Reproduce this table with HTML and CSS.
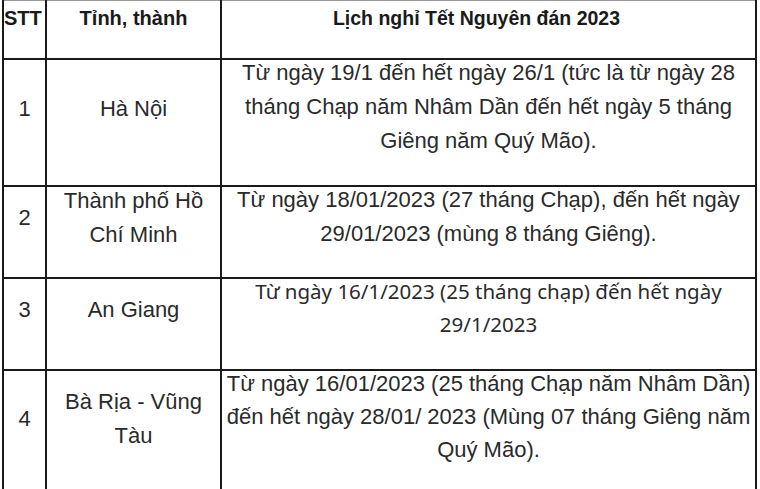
FILE: index.html
```html
<!DOCTYPE html>
<html lang="vi">
<head>
<meta charset="utf-8">
<link rel="stylesheet" href="styles.css">
</head>
<body>
<table class="schedule">
  <colgroup>
    <col class="c-stt">
    <col class="c-prov">
    <col class="c-date">
  </colgroup>
  <thead>
    <tr>
      <th class="stt"><p>STT</p></th>
      <th><p>Tỉnh, thành</p></th>
      <th class="h-date"><p>Lịch nghỉ Tết Nguyên đán 2023</p></th>
    </tr>
  </thead>
  <tbody>
    <tr class="r1">
      <td class="num"><p>1</p></td>
      <td class="prov"><p>Hà Nội</p></td>
      <td class="date"><p>Từ ngày 19/1 đến hết ngày 26/1 (tức là từ ngày 28 tháng Chạp năm Nhâm Dần đến hết ngày 5 tháng Giêng năm Quý Mão).</p></td>
    </tr>
    <tr class="r2">
      <td class="num"><p>2</p></td>
      <td class="prov"><p>Thành phố Hồ Chí Minh</p></td>
      <td class="date"><p>Từ ngày 18/01/2023 (27 tháng Chạp), đến hết ngày 29/01/2023 (mùng 8 tháng Giêng).</p></td>
    </tr>
    <tr class="r3">
      <td class="num"><p>3</p></td>
      <td class="prov"><p>An Giang</p></td>
      <td class="date"><p class="alt">Từ ngày 16/1/2023 (25 tháng chạp) đến hết ngày 29/1/2023</p></td>
    </tr>
    <tr class="r4">
      <td class="num"><p>4</p></td>
      <td class="prov"><p>Bà Rịa - Vũng Tàu</p></td>
      <td class="date"><p>Từ ngày 16/01/2023 (25 tháng Chạp năm Nhâm Dần) đến hết ngày 28/01/ 2023 (Mùng 07 tháng Giêng năm Quý Mão).</p></td>
    </tr>
  </tbody>
</table>
</body>
</html>
```

FILE: styles.css
```css
html, body {
  margin: 0;
  padding: 0;
  background: #ffffff;
}

body {
  padding-left: 2px;
}

.schedule {
  width: 755px;
  border-collapse: collapse;
  table-layout: fixed;
  font-family: "Liberation Sans", Arial, sans-serif;
  font-size: 22px;
  line-height: 34px;
  color: #2a2a2a;
  border-top: 1px solid #999999;
  border-left: 2px solid #1a1a1a;
  border-right: 2px solid #1a1a1a;
  border-bottom: 2px solid #1a1a1a;
}

.c-stt { width: 43px; }
.c-prov { width: 175px; }

.schedule th,
.schedule td {
  border: 2px solid #1a1a1a;
  padding: 0 4px;
  text-align: center;
  vertical-align: middle;
}

.schedule p {
  margin: 0 0 20px;
}

.schedule td.num {
  padding: 0;
}

.schedule td.prov {
  padding: 0 10px;
}

.schedule td.num p,
.schedule td.prov p {
  margin: -4px 0 24px;
}

.schedule td.date {
  vertical-align: top;
}

.schedule td.date p {
  margin-top: -4px;
}

.schedule thead th {
  border-top: 0;
  vertical-align: top;
  height: 57px;
  padding: 0 2px;
  font-size: 20px;
  color: #1a1a1a;
}

.schedule thead th.stt {
  padding: 0;
  text-align: left;
}

.schedule thead th.h-date {
  font-size: 19.5px;
  padding-right: 26px;
}

.schedule th p {
  margin-bottom: 22px;
}

.r1 td { height: 125px; }
.r2 td { height: 90px; }
.r3 td { height: 90px; }
.r4 td { height: 124px; }

.r4 td.date p {
  line-height: 33px;
}

.alt {
  font-family: "Noto Sans", "Open Sans", sans-serif;
  font-size: 20.5px;
  line-height: 33px;
}
```
